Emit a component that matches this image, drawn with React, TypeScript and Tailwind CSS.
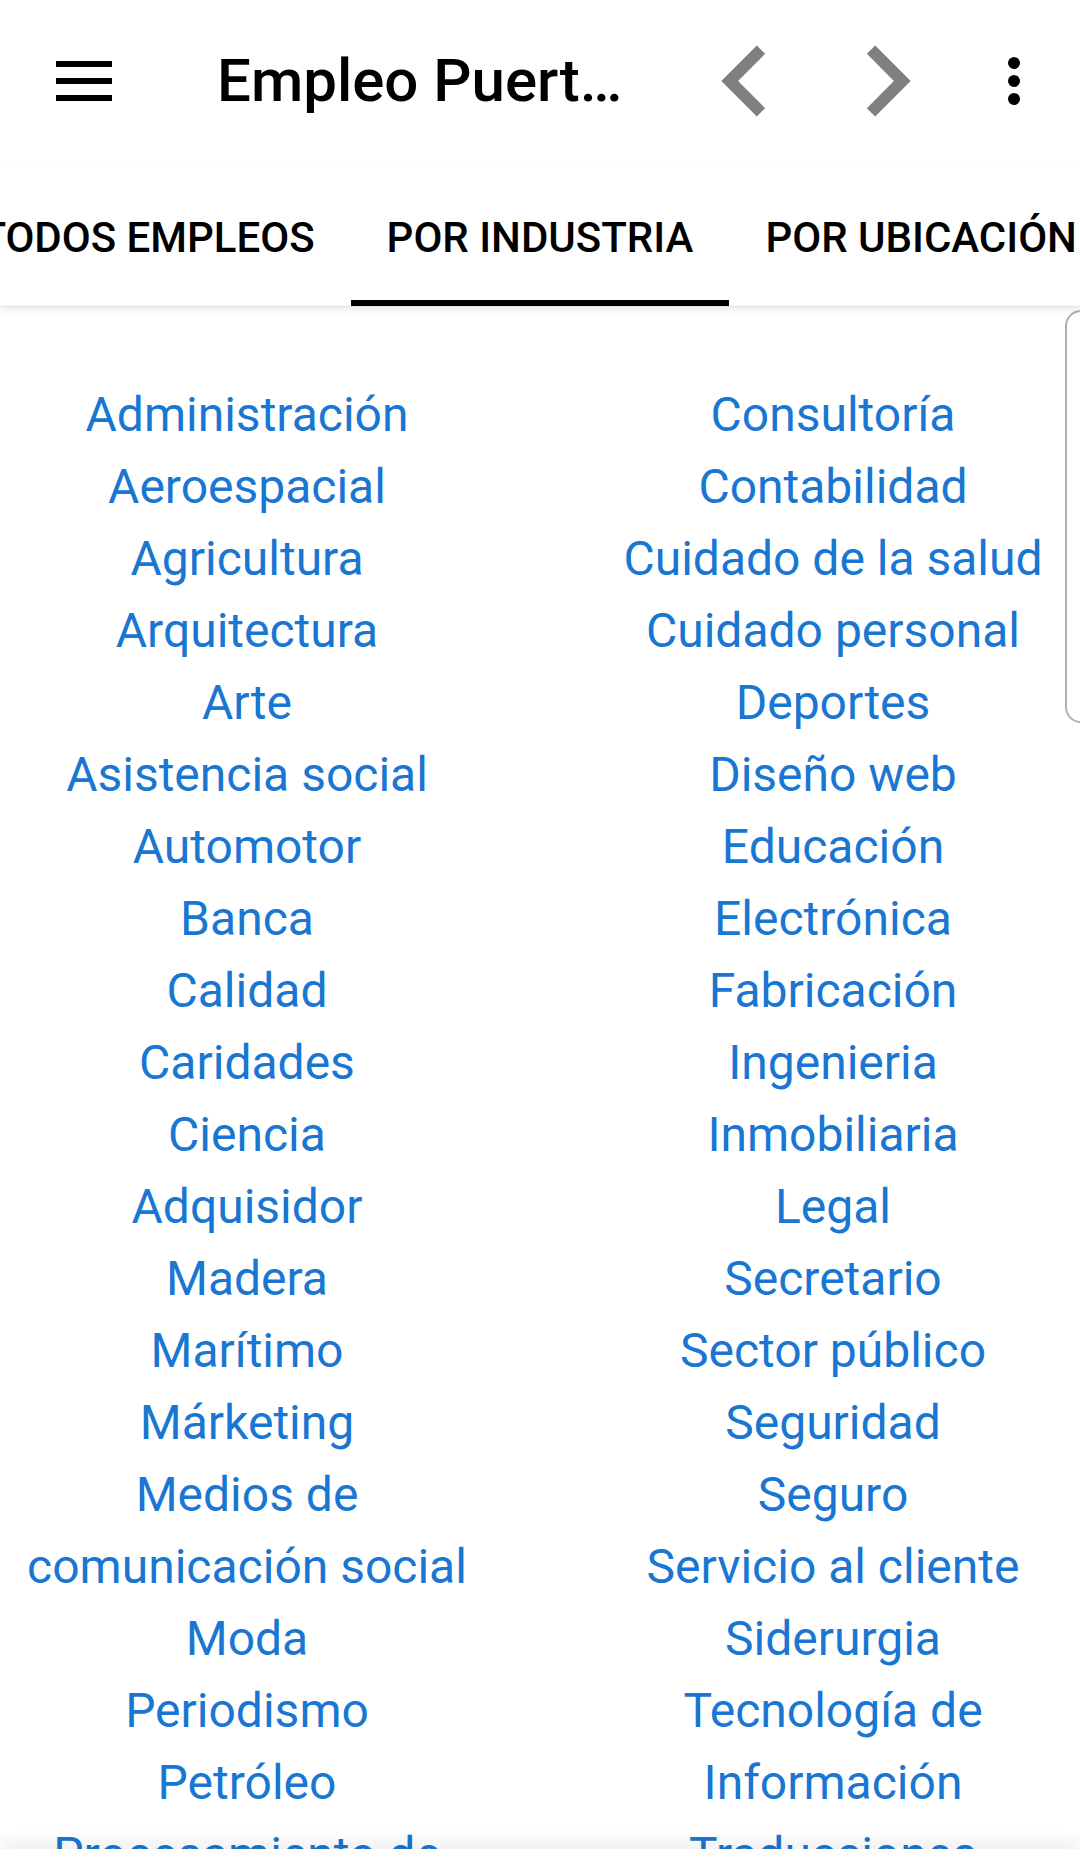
import React from 'react';

const leftItems = [
  'Administración',
  'Aeroespacial',
  'Agricultura',
  'Arquitectura',
  'Arte',
  'Asistencia social',
  'Automotor',
  'Banca',
  'Calidad',
  'Caridades',
  'Ciencia',
  'Adquisidor',
  'Madera',
  'Marítimo',
  'Márketing',
  'Medios de comunicación social',
  'Moda',
  'Periodismo',
  'Petróleo',
  'Procesamiento de alimentos',
];

const rightItems = [
  'Consultoría',
  'Contabilidad',
  'Cuidado de la salud',
  'Cuidado personal',
  'Deportes',
  'Diseño web',
  'Educación',
  'Electrónica',
  'Fabricación',
  'Ingenieria',
  'Inmobiliaria',
  'Legal',
  'Secretario',
  'Sector público',
  'Seguridad',
  'Seguro',
  'Servicio al cliente',
  'Siderurgia',
  'Tecnología de Información',
  'Traducciones',
];

const ChevronLeft = () => (
  <svg viewBox="0 0 24 24" className="w-[142px] h-[142px]" fill="#808080">
    <path d="M15.41 7.41L14 6l-6 6 6 6 1.41-1.41L10.83 12z" />
  </svg>
);

const ChevronRight = () => (
  <svg viewBox="0 0 24 24" className="w-[142px] h-[142px]" fill="#808080">
    <path d="M10 6L8.59 7.41 13.17 12l-4.58 4.59L10 18l6-6z" />
  </svg>
);

const MoreVert = () => (
  <svg viewBox="0 0 24 24" className="w-[72px] h-[72px]" fill="#000">
    <circle cx="12" cy="6" r="2" />
    <circle cx="12" cy="12" r="2" />
    <circle cx="12" cy="18" r="2" />
  </svg>
);

const Hamburger = () => (
  <div className="flex flex-col gap-[11px] w-[56px]">
    <span className="block h-[6px] bg-black" />
    <span className="block h-[6px] bg-black" />
    <span className="block h-[6px] bg-black" />
  </div>
);

const IndustryColumn = ({ items }: { items: string[] }) => (
  <ul className="w-[494px] text-center">
    {items.map((name) => (
      <li key={name}>
        <a className="text-[48px] leading-[72px] text-[#1976d2]">{name}</a>
      </li>
    ))}
  </ul>
);

export default function App() {
  return (
    <div
      className="relative h-[1861px] w-[1080px] overflow-hidden bg-white flex flex-col"
      style={{ fontFamily: 'Roboto, "Noto Sans", sans-serif' }}
    >
      {/* toolbar */}
      <header className="h-[161px] flex items-center shrink-0">
        <div className="w-[56px] ml-[56px] flex items-center">
          <Hamburger />
        </div>
        <h1 className="ml-[105px] text-[60px] font-medium text-black leading-none">Empleo Puert…</h1>
        <div className="ml-auto flex items-center">
          <ChevronLeft />
          <ChevronRight />
          <div className="ml-[20px] mr-[30px]">
            <MoreVert />
          </div>
        </div>
      </header>

      {/* tabs */}
      <nav className="relative z-10 h-[146px] shrink-0 overflow-hidden grid grid-cols-[minmax(0,1fr)_auto_minmax(0,1fr)] border-b border-[#e4e4e4] shadow-[0_3px_6px_rgba(0,0,0,0.08)]">
        <div className="justify-self-end flex items-center pt-[8px] px-[36px] whitespace-nowrap text-[42px] font-medium text-black">
          TODOS EMPLEOS
        </div>
        <div className="relative flex items-center pt-[8px] px-[36px] whitespace-nowrap text-[42px] font-medium text-black">
          POR INDUSTRIA
          <span className="absolute left-0 right-0 bottom-0 h-[6px] bg-black" />
        </div>
        <div className="justify-self-start flex items-center pt-[8px] px-[36px] whitespace-nowrap text-[42px] font-medium text-black">
          POR UBICACIÓN
        </div>
      </nav>

      {/* industry list */}
      <main className="relative flex-1 overflow-hidden">
        <div className="flex justify-center gap-[92px] pt-[72px]">
          <IndustryColumn items={leftItems} />
          <IndustryColumn items={rightItems} />
        </div>
        <div className="absolute left-[1065px] top-[3px] w-[40px] h-[413px] rounded-[16px] border-2 border-[#b0b0b0]" />
      </main>

      {/* bottom edge */}
      <footer className="relative z-10 h-[12px] shrink-0 bg-white shadow-[0_-8px_14px_rgba(0,0,0,0.07)]" />
    </div>
  );
}
